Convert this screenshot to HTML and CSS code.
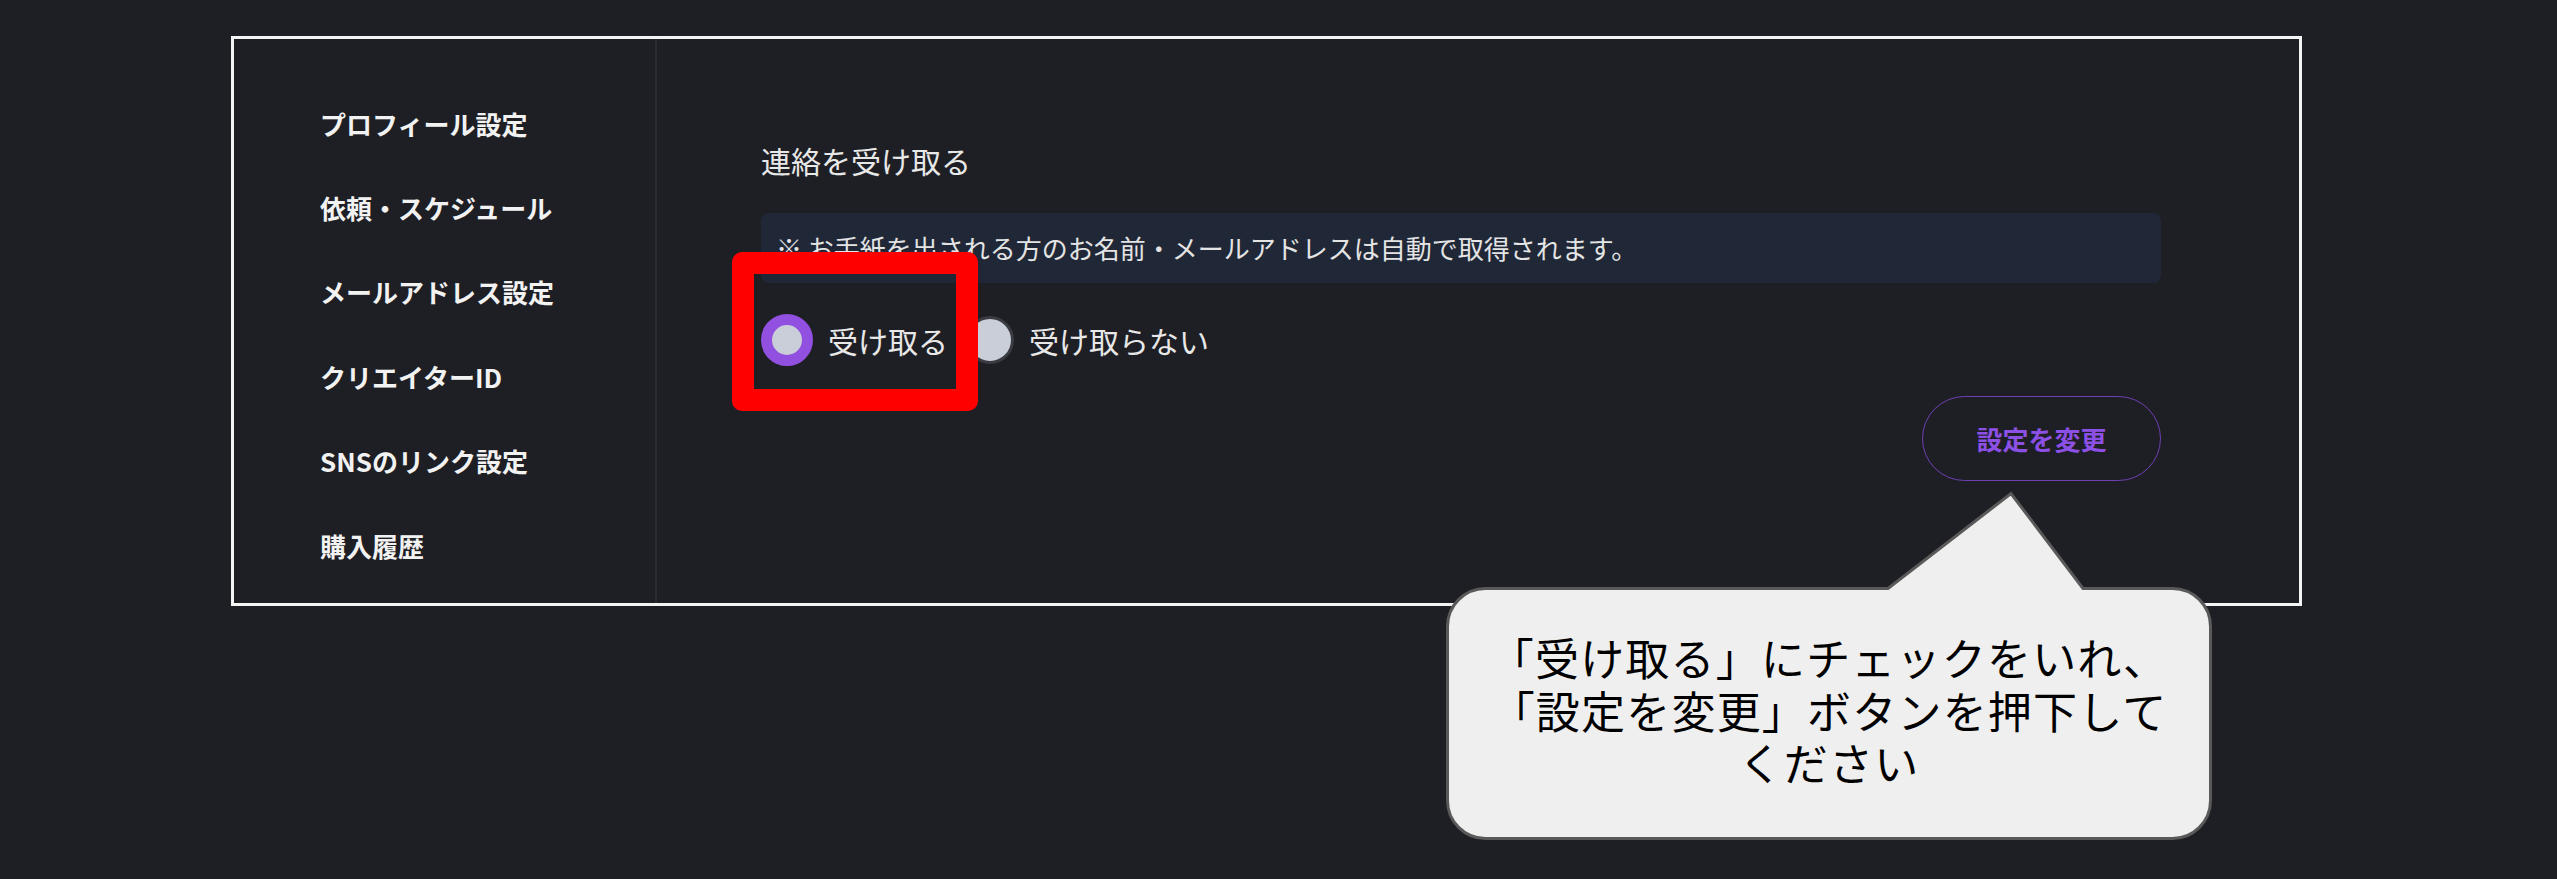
FILE: index.html
```html
<!DOCTYPE html>
<html lang="ja">
<head>
  <meta charset="UTF-8">
  <title>連絡設定</title>
  <link rel="stylesheet" href="styles.css">
</head>
<body>
  <div class="page">

    <div class="panel">
      <nav class="side">
        <a class="side-item">プロフィール設定</a>
        <a class="side-item">依頼・スケジュール</a>
        <a class="side-item">メールアドレス設定</a>
        <a class="side-item">クリエイターID</a>
        <a class="side-item">SNSのリンク設定</a>
        <a class="side-item">購入履歴</a>
      </nav>

      <main class="content">
        <h2 class="section-title">連絡を受け取る</h2>
        <p class="notice">※ お手紙を出される方のお名前・メールアドレスは自動で取得されます。</p>
        <div class="radios">
          <label class="radio"><span class="dot checked"></span>受け取る</label>
          <label class="radio"><span class="dot"></span>受け取らない</label>
        </div>
        <div class="actions">
          <button type="button" class="btn-save">設定を変更</button>
        </div>
      </main>
    </div>

    <!-- annotation layer -->
    <div class="highlight"></div>

    <div class="callout">
      <svg width="766" height="350" viewBox="0 0 766 350">
        <path d="M 39.5,97.5 H 442 L 565,2.5 L 637,97.5 H 726.5 A 38 38 0 0 1 764.5,135.5 V 309.5 A 38 38 0 0 1 726.5,347.5 H 39.5 A 38 38 0 0 1 1.5,309.5 V 135.5 A 38 38 0 0 1 39.5,97.5 Z"
              fill="#efefef" stroke="#595959" stroke-width="3" stroke-linejoin="miter"/>
      </svg>
      <p class="callout-text">「受け取る」にチェックをいれ、<br>「設定を変更」ボタンを押下して<br>ください</p>
    </div>

  </div>
</body>
</html>
```

FILE: styles.css
```css
/* Base */
* {
  box-sizing: border-box;
}

body {
  margin: 0;
  background-color: #1e1f24;
  font-family: "Noto Sans CJK JP", "Noto Sans", sans-serif;
  color: #e8e8e8;
}

.page {
  position: relative;
  width: 2557px;
  height: 879px;
  padding: 36px 0 0 231px;
}

/* Settings panel */
.panel {
  display: flex;
  width: 2071px;
  height: 570px;
  border: 3px solid #f4f4f4;
}

.side {
  width: 423px;
  padding: 42px 0 0 86px;
  border-right: 2px solid #2b2c33;
  display: flex;
  flex-direction: column;
}

.side-item {
  display: flex;
  align-items: center;
  height: 84.4px;
  font-size: 26px;
  font-weight: 700;
  color: #f2f2f2;
  cursor: pointer;
}

.content {
  flex: 1;
  padding: 101px 138px 0 104px;
}

.section-title {
  margin: 0;
  font-size: 30px;
  font-weight: 400;
  line-height: 40px;
  color: #e8e8e8;
}

.notice {
  margin: 33px 0 0;
  padding: 16px 15px;
  font-size: 26px;
  line-height: 38px;
  background-color: #202838;
  border-radius: 8px;
  color: #e4e4e4;
}

.radios {
  display: flex;
  align-items: center;
  height: 52px;
  margin-top: 31px;
}

.radio {
  display: flex;
  align-items: center;
  gap: 15px;
  margin-right: 18px;
  font-size: 30px;
  line-height: 40px;
  color: #e8e8e8;
}

.dot {
  width: 48px;
  height: 48px;
  border-radius: 50%;
  background-color: #c9ced9;
  border: 3px solid #3a3b42;
}

.dot.checked {
  width: 52px;
  height: 52px;
  border: 11px solid #9150e0;
}

.actions {
  display: flex;
  justify-content: flex-end;
  margin-top: 30px;
}

.btn-save {
  width: 239px;
  height: 85px;
  border: 1.5px solid #6e40b5;
  border-radius: 43px;
  background: transparent;
  color: #8d50e6;
  font-family: "Noto Sans CJK JP", sans-serif;
  font-size: 26px;
  font-weight: 700;
  cursor: pointer;
}

/* Annotations */
.highlight {
  position: absolute;
  left: 732px;
  top: 252px;
  width: 246px;
  height: 159px;
  border: 22px solid #ff0000;
  border-radius: 10px;
}

.callout {
  position: absolute;
  left: 1446px;
  top: 491px;
  width: 766px;
  height: 350px;
}

.callout svg {
  position: absolute;
  left: 0;
  top: 0;
}

.callout-text {
  position: absolute;
  left: 0;
  right: 0;
  top: 140px;
  margin: 0;
  text-align: center;
  font-size: 44px;
  line-height: 52.5px;
  letter-spacing: 1.2px;
  color: #000;
}
```
